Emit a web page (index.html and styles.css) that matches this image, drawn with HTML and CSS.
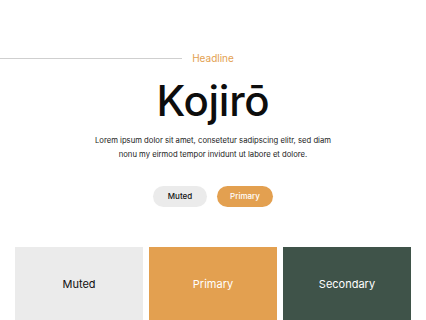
FILE: index.html
```html
<!doctype html>
<html lang="en">
<head>
  <meta charset="UTF-8">
  <title>Kojirō</title>
  <link rel="stylesheet" href="styles.css">
</head>
<body>

<div id="hero">
  <div class="eyebrow">
    <span class="rule"></span>
    <span class="label">Headline</span>
    <span></span>
  </div>
  <h1>Kojirō</h1>
  <p>Lorem ipsum dolor sit amet, consetetur sadipscing elitr, sed diam<br/>nonu my eirmod tempor invidunt ut labore et dolore.</p>
  <div class="buttons">
    <a class="btn muted">Muted</a>
    <a class="btn primary">Primary</a>
  </div>
</div>

<div id="swatches">
  <div class="swatch muted">Muted</div>
  <div class="swatch primary">Primary</div>
  <div class="swatch secondary">Secondary</div>
</div>

</body>
</html>
```

FILE: styles.css
```css
body {
  margin: 0;
  background: #fff;
  font-family: 'Inter', 'Noto Sans', sans-serif;
  color: #111;
}

#hero {
  padding-top: 52px;
  text-align: center;
}

.eyebrow {
  display: grid;
  grid-template-columns: 1fr auto 1fr;
  gap: 10px;
  align-items: center;
}

.eyebrow .rule {
  height: 1px;
  background: #cfcfcf;
}

.eyebrow .label {
  font-size: 10px;
  line-height: 12px;
  color: #e3a050;
}

h1 {
  margin: 12px 0 0;
  font-size: 42px;
  line-height: 50px;
  font-weight: 500;
  letter-spacing: -0.3px;
  color: #0d0d0d;
}

p {
  margin: 8px 0 0;
  font-size: 7.7px;
  line-height: 14px;
  color: #222;
}

.buttons {
  display: flex;
  justify-content: center;
  gap: 10px;
  margin-top: 24px;
}

.btn {
  display: block;
  width: 56px;
  height: 21px;
  line-height: 21px;
  border-radius: 11px;
  font-size: 8px;
  font-weight: 500;
}

.btn.muted {
  width: 54px;
  background: #ebebeb;
  color: #111;
}

.btn.primary {
  background: #e3a050;
  color: #fff;
}

#swatches {
  display: grid;
  grid-template-columns: repeat(3, 128px);
  gap: 6px;
  padding: 0 15px;
  margin-top: 40px;
}

.swatch {
  height: 74px;
  display: flex;
  align-items: center;
  justify-content: center;
  font-size: 11px;
}

.swatch.muted {
  background: #ebebeb;
  color: #111;
}

.swatch.primary {
  background: #e3a050;
  color: #fff;
}

.swatch.secondary {
  background: #3f5349;
  color: #fff;
}
```
